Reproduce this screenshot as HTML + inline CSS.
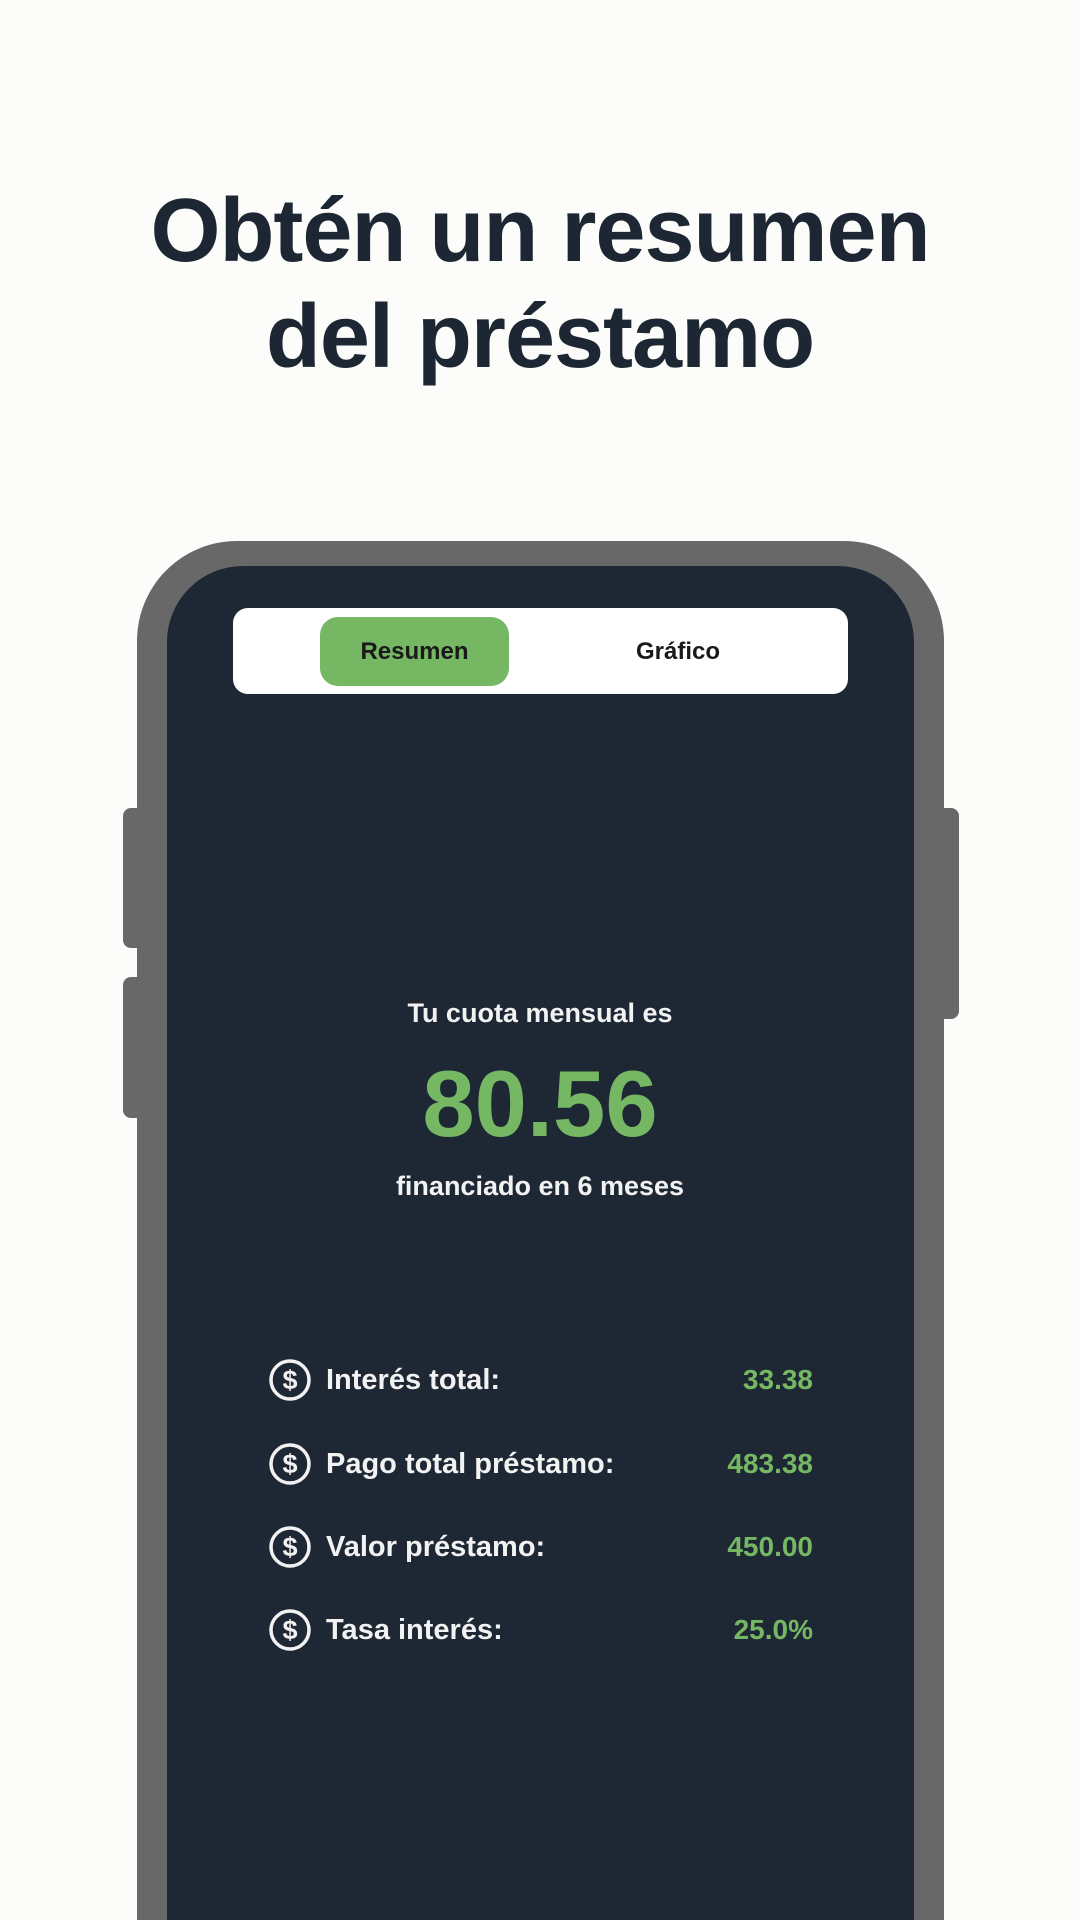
<!DOCTYPE html>
<html><head><meta charset="utf-8"><style>
html,body{margin:0;padding:0;width:1080px;height:1920px;overflow:hidden;}
body{background:#fcfcfa;position:relative;font-family:"Liberation Sans",sans-serif;}
.t{position:absolute;left:0;width:1080px;text-align:center;color:#1c2733;font-weight:bold;font-size:90px;letter-spacing:-1px;line-height:106px;top:178px;}
.phone{position:absolute;left:137px;top:541px;width:807px;height:1379px;background:#686868;border-radius:100px 100px 0 0;}
.screen{position:absolute;left:167px;top:566px;width:747px;height:1354px;background:#1e2834;border-radius:76px 76px 0 0;}
.btn{position:absolute;background:#686868;border-radius:8px;}
.tabs{position:absolute;left:233px;top:608px;width:615px;height:86px;background:#fff;border-radius:15px;}
.g{position:absolute;left:320px;top:617px;width:189px;height:69px;background:#76b763;border-radius:18px;}
.tl{position:absolute;top:617px;height:69px;line-height:69px;font-size:24px;font-weight:bold;color:#1a1a1a;text-align:center;}
.c{position:absolute;left:0;width:1080px;text-align:center;color:#f2f2f2;font-weight:bold;}
.row{position:absolute;left:268px;width:545px;height:44px;}
.row svg{position:absolute;left:0;top:0;}
.row .l{position:absolute;left:58px;top:0;line-height:44px;font-size:29px;font-weight:bold;color:#f2f2f2;}
.row .v{position:absolute;right:0;top:0;line-height:44px;font-size:28px;font-weight:bold;color:#76b763;}
</style></head><body>
<div class="t">Obtén un resumen<br>del préstamo</div>
<div class="btn" style="left:123px;top:808px;width:22px;height:140px"></div>
<div class="btn" style="left:123px;top:977px;width:22px;height:141px"></div>
<div class="btn" style="left:936px;top:808px;width:23px;height:211px"></div>
<div class="phone"></div>
<div class="screen"></div>
<div class="tabs"></div>
<div class="g"></div>
<div class="tl" style="left:320px;width:189px">Resumen</div>
<div class="tl" style="left:583px;width:190px">Gráfico</div>
<div class="c" style="top:998px;font-size:27px">Tu cuota mensual es</div>
<div class="c" style="top:1050px;font-size:94px;color:#76b763">80.56</div>
<div class="c" style="top:1171px;font-size:27px">financiado en 6 meses</div>

<div class="row" style="top:1358px">
<svg width="44" height="44" viewBox="0 0 44 44"><circle cx="22" cy="22" r="19" fill="none" stroke="#f2f2f2" stroke-width="3.5"/><text x="22" y="31" text-anchor="middle" font-size="27" font-weight="bold" font-family="Liberation Sans" fill="#f2f2f2">$</text></svg>
<div class="l">Interés total:</div><div class="v">33.38</div></div>
<div class="row" style="top:1442px">
<svg width="44" height="44" viewBox="0 0 44 44"><circle cx="22" cy="22" r="19" fill="none" stroke="#f2f2f2" stroke-width="3.5"/><text x="22" y="31" text-anchor="middle" font-size="27" font-weight="bold" font-family="Liberation Sans" fill="#f2f2f2">$</text></svg>
<div class="l">Pago total préstamo:</div><div class="v">483.38</div></div>
<div class="row" style="top:1525px">
<svg width="44" height="44" viewBox="0 0 44 44"><circle cx="22" cy="22" r="19" fill="none" stroke="#f2f2f2" stroke-width="3.5"/><text x="22" y="31" text-anchor="middle" font-size="27" font-weight="bold" font-family="Liberation Sans" fill="#f2f2f2">$</text></svg>
<div class="l">Valor préstamo:</div><div class="v">450.00</div></div>
<div class="row" style="top:1608px">
<svg width="44" height="44" viewBox="0 0 44 44"><circle cx="22" cy="22" r="19" fill="none" stroke="#f2f2f2" stroke-width="3.5"/><text x="22" y="31" text-anchor="middle" font-size="27" font-weight="bold" font-family="Liberation Sans" fill="#f2f2f2">$</text></svg>
<div class="l">Tasa interés:</div><div class="v">25.0%</div></div>
</body></html>
